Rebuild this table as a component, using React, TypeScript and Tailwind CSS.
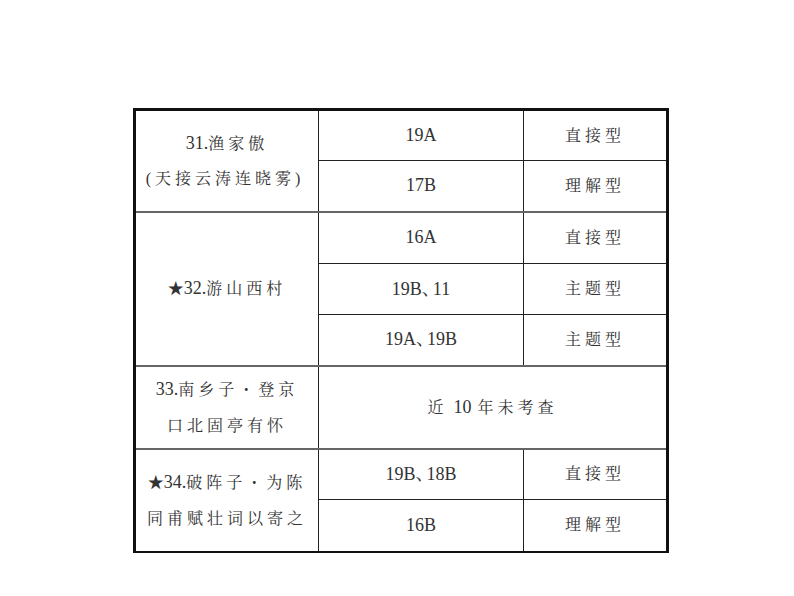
const font = "font-['Liberation_Serif','Noto_Serif_CJK_SC','Noto_Sans_CJK_SC',serif]";

const cell = "border-[#222] text-center align-middle p-0";

const Num = ({ children }: { children: React.ReactNode }) => (
  <span className="tracking-normal text-[18px]">{children}</span>
);

const Dun = () => <span className="tracking-[-7px]">、</span>;

const App = () => {
  return (
    <div className={`w-[794px] h-[596px] bg-white ${font} text-[#333]`}>
      <div className="pt-[108px] pl-[133px]">
        <table className="table-fixed border-collapse w-[533px] border-t-[3px] border-l-[3px] border-r-[3px] border-b-2 border-[#111]">
          <colgroup>
            <col className="w-[184px]" />
            <col className="w-[205px]" />
            <col className="w-[144px]" />
          </colgroup>
          <tbody className="text-[16px]">
            {/* 31 */}
            <tr className="h-[51px]">
              <td rowSpan={2} className={`${cell} border-r border-b-2 border-b-[#666] leading-[35px] tracking-[4px]`}>
                <div><Num>31.</Num>渔家傲</div>
                <div className="-ml-1">(天接云涛连晓雾)</div>
              </td>
              <td className={`${cell} border-r border-b text-[18px]`}>19A</td>
              <td className={`${cell} border-b tracking-[4px]`}>直接型</td>
            </tr>
            <tr className="h-[51px]">
              <td className={`${cell} border-r border-b-2 border-b-[#666] text-[18px]`}>17B</td>
              <td className={`${cell} border-b-2 border-b-[#666] tracking-[4px]`}>理解型</td>
            </tr>

            {/* 32 */}
            <tr className="h-[52px]">
              <td rowSpan={3} className={`${cell} border-r border-b-2 border-b-[#666] tracking-[4px]`}>
                <span className="tracking-normal">★</span><Num>32.</Num>游山西村
              </td>
              <td className={`${cell} border-r border-b text-[18px]`}>16A</td>
              <td className={`${cell} border-b tracking-[4px]`}>直接型</td>
            </tr>
            <tr className="h-[51px]">
              <td className={`${cell} border-r border-b text-[18px]`}>19B<Dun />11</td>
              <td className={`${cell} border-b tracking-[4px]`}>主题型</td>
            </tr>
            <tr className="h-[51px]">
              <td className={`${cell} border-r border-b-2 border-b-[#666] text-[18px]`}>19A<Dun />19B</td>
              <td className={`${cell} border-b-2 border-b-[#666] tracking-[4px]`}>主题型</td>
            </tr>

            {/* 33 */}
            <tr className="h-[83px]">
              <td className={`${cell} border-r border-b-2 border-b-[#666] leading-[36px] tracking-[4px]`}>
                <div><Num>33.</Num>南乡子・登京</div>
                <div>口北固亭有怀</div>
              </td>
              <td colSpan={2} className={`${cell} border-b-2 border-b-[#666] tracking-[4px]`}>
                近<span className="text-[18px] tracking-normal mx-[6px]">10</span>年未考查
              </td>
            </tr>

            {/* 34 */}
            <tr className="h-[51px]">
              <td rowSpan={2} className={`${cell} border-r leading-[36px] tracking-[4px]`}>
                <div>
                  <span className="tracking-normal">★</span><Num>34.</Num>破阵子・为陈
                </div>
                <div>同甫赋壮词以寄之</div>
              </td>
              <td className={`${cell} border-r border-b text-[18px]`}>19B<Dun />18B</td>
              <td className={`${cell} border-b tracking-[4px]`}>直接型</td>
            </tr>
            <tr className="h-[52px]">
              <td className={`${cell} border-r text-[18px]`}>16B</td>
              <td className={`${cell} tracking-[4px]`}>理解型</td>
            </tr>
          </tbody>
        </table>
      </div>
    </div>
  );
};

export default App;
